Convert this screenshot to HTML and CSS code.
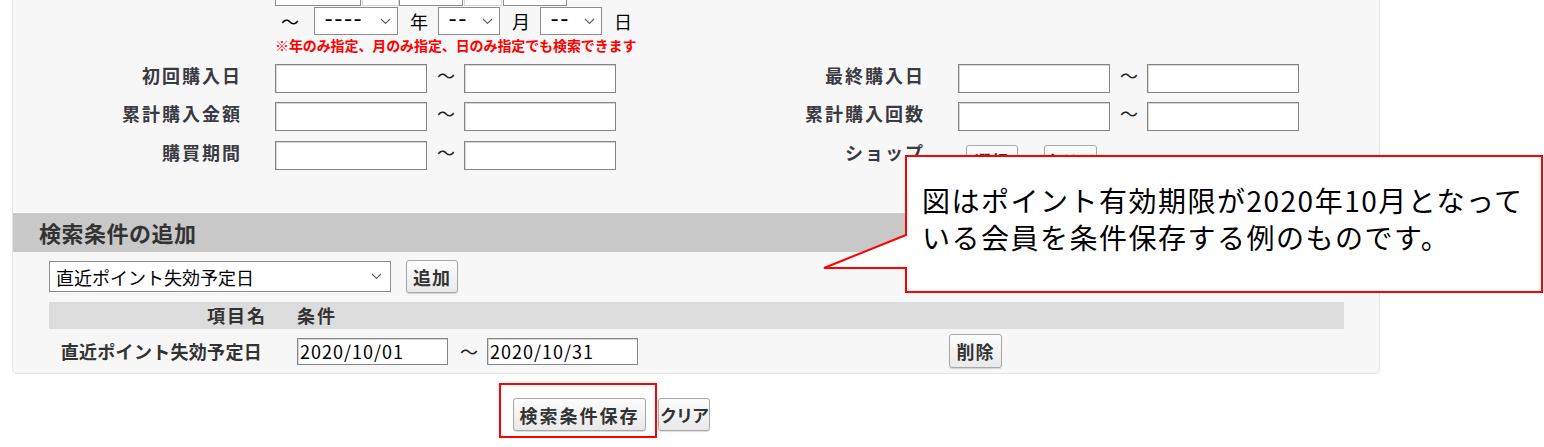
FILE: index.html
```html
<!DOCTYPE html>
<html lang="ja">
<head>
    <meta charset="UTF-8">
    <title>検索条件の追加</title>
    <link rel="stylesheet" href="styles.css">
</head>
<body>
    <div class="panel">
        <div class="stub">
            <span class="box w86"></span>
            <span class="box light w37"></span>
            <span class="box w64"></span>
            <span class="box light w38"></span>
            <span class="box w64 gap1"></span>
        </div>

        <div class="date-row">
            <span class="wave">～</span>
            <div class="sel sel-year">
                <span class="dash">----</span>
                <svg width="11" height="7" viewBox="0 0 11 7"><path d="M1 1l4.5 4.5L10 1" fill="none" stroke="#666" stroke-width="1.2"/></svg>
            </div>
            <span class="unit">年</span>
            <div class="sel sel-md">
                <span class="dash">--</span>
                <svg width="11" height="7" viewBox="0 0 11 7"><path d="M1 1l4.5 4.5L10 1" fill="none" stroke="#666" stroke-width="1.2"/></svg>
            </div>
            <span class="unit">月</span>
            <div class="sel sel-md">
                <span class="dash">--</span>
                <svg width="11" height="7" viewBox="0 0 11 7"><path d="M1 1l4.5 4.5L10 1" fill="none" stroke="#666" stroke-width="1.2"/></svg>
            </div>
            <span class="unit">日</span>
        </div>

        <p class="note">※年のみ指定、月のみ指定、日のみ指定でも検索できます</p>

        <div class="rows">
            <div class="row">
                <div class="half">
                    <span class="label">初回購入日</span>
                    <input type="text" class="text"><span class="tilde">～</span><input type="text" class="text">
                </div>
                <div class="half right">
                    <span class="label">最終購入日</span>
                    <input type="text" class="text"><span class="tilde">～</span><input type="text" class="text">
                </div>
            </div>
            <div class="row">
                <div class="half">
                    <span class="label">累計購入金額</span>
                    <input type="text" class="text"><span class="tilde">～</span><input type="text" class="text">
                </div>
                <div class="half right">
                    <span class="label">累計購入回数</span>
                    <input type="text" class="text"><span class="tilde">～</span><input type="text" class="text">
                </div>
            </div>
            <div class="row">
                <div class="half">
                    <span class="label">購買期間</span>
                    <input type="text" class="text"><span class="tilde">～</span><input type="text" class="text">
                </div>
                <div class="half right">
                    <span class="label">ショップ</span>
                    <button type="button" class="btn shop">選択</button>
                    <button type="button" class="btn shop">クリア</button>
                </div>
            </div>
        </div>

        <h3 class="bar">検索条件の追加</h3>

        <div class="add">
            <div class="sel sel-item">
                <span>直近ポイント失効予定日</span>
                <svg width="11" height="7" viewBox="0 0 11 7"><path d="M1 1l4.5 4.5L10 1" fill="none" stroke="#666" stroke-width="1.2"/></svg>
            </div>
            <button type="button" class="btn btn-add">追加</button>
        </div>

        <div class="cond">
            <div class="cond-head">
                <span class="c1">項目名</span>
                <span class="c2">条件</span>
            </div>
            <div class="cond-row">
                <span class="c1">直近ポイント失効予定日</span>
                <input type="text" class="date" value="2020/10/01"><span class="tilde">～</span><input type="text" class="date" value="2020/10/31">
                <button type="button" class="btn btn-del">削除</button>
            </div>
        </div>
    </div>

    <div class="actions">
        <span class="mark"><button type="button" class="btn btn-save">検索条件保存</button></span>
        <button type="button" class="btn btn-clear">クリア</button>
    </div>

    <div class="callout">
        <svg width="721" height="139" viewBox="0 0 721 139">
            <path d="M83 1H719V137H83V113L1 113L83 80Z" fill="#fff" stroke="#f00" stroke-width="2"/>
        </svg>
        <p>図はポイント有効期限が2020年10月となって<br>いる会員を条件保存する例のものです。</p>
    </div>
</body>
</html>
```

FILE: styles.css
```css
*{
    margin: 0;
    padding: 0;
    box-sizing: border-box;
}

body{
    font-family: "Noto Sans CJK JP", "Noto Sans", sans-serif;
    color: #333;
    background: #fff;
}

.panel{
    margin-left: 12px;
    width: 1368px;
    background: #f7f7f7;
    border: 1px solid #e4e4e4;
    border-top: 0;
    border-radius: 0 0 5px 5px;
    padding-bottom: 5px;
}

/* rows cut off at the top */
.stub{
    display: flex;
    height: 6px;
    padding-left: 262px;
}

.stub .box{
    height: 6px;
    background: #fff;
    border: 1px solid #8c8c8c;
    border-top: 0;
}

.stub .light{
    border-color: #d4d4d4;
    margin-left: 1px;
}

.stub .gap1{
    margin-left: 1px;
}

.w86{ width: 86px; }
.w37{ width: 37px; }
.w38{ width: 38px; }
.w64{ width: 64px; }

.date-row{
    display: flex;
    align-items: center;
    height: 28px;
    margin-top: 1px;
    padding-left: 268px;
    color: #000;
    font-size: 18px;
}

.date-row .wave{
    margin-right: 15px;
}

.date-row .unit{
    margin: 0 10px 0 12px;
}

.sel{
    display: flex;
    align-items: center;
    justify-content: space-between;
    height: 28px;
    background: #fff;
    border: 1px solid #8c8c8c;
    padding: 0 6px 0 7px;
    color: #000;
}

.sel svg{
    flex: none;
}

.sel-year{ width: 84px; }
.sel-md{ width: 62px; }

.dash{
    font-family: "Liberation Mono", monospace;
    font-size: 22px;
    line-height: 26px;
    letter-spacing: -3.5px;
}

.note{
    margin-top: 2px;
    padding-left: 262px;
    color: #f00;
    font-size: 14px;
    line-height: 16px;
    font-weight: bold;
    letter-spacing: -0.1px;
}

.rows{
    margin-top: 11px;
}

.row{
    display: flex;
    height: 29px;
}

.row + .row{
    margin-top: 9px;
}

.row:nth-child(3){
    margin-top: 10px;
}

.half{
    display: flex;
    align-items: flex-start;
}

.label{
    width: 229px;
    margin-right: 33px;
    text-align: right;
    font-size: 18px;
    line-height: 22px;
    font-weight: bold;
    letter-spacing: 2px;
    color: #3a3a42;
}

.half.right .label{
    width: 309px;
}

.text, .date{
    width: 152px;
    height: 29px;
    background: #fff;
    border: 1px solid #858585;
    box-shadow: inset 1px 1px 0 #d6d6d6;
    outline: none;
}

.tilde{
    margin: 0 9px 0 10px;
    font-size: 18px;
    line-height: 22px;
    color: #222;
}

.btn{
    font-family: "Noto Sans CJK JP", sans-serif;
    font-size: 18px;
    font-weight: bold;
    letter-spacing: 1px;
    color: #333;
    background: linear-gradient(#fcfcfc, #e9e9e9);
    border: 1px solid #a8a8a8;
    border-radius: 3px;
    box-shadow: 0 1px 1px rgba(0,0,0,0.15);
    height: 33px;
    padding: 0;
    white-space: nowrap;
}

.btn.shop{
    width: 52px;
    height: 30px;
    margin-top: 4px;
    margin-left: 8px;
    font-size: 16px;
}

.btn.shop + .btn.shop{
    margin-left: 26px;
    width: 53px;
}

.bar{
    margin-top: 43px;
    height: 39px;
    line-height: 39px;
    background: #c8c8c8;
    box-shadow: 0 -1px 0 #fff;
    padding-left: 26px;
    font-size: 22px;
    font-weight: bold;
    letter-spacing: 0.5px;
    color: #333;
}

.add{
    display: flex;
    align-items: center;
    padding: 8px 0 0 36px;
}

.sel-item{
    width: 342px;
    height: 31px;
    font-size: 18px;
    padding: 0 8px 0 6px;
}

.btn-add{
    width: 52px;
    margin-left: 15px;
}

.cond{
    margin: 9px 0 0 36px;
    width: 1295px;
}

.cond-head{
    display: flex;
    height: 27px;
    line-height: 27px;
    background: #dcdcdc;
    font-size: 18px;
    font-weight: bold;
    letter-spacing: 2px;
    color: #333;
}

.cond-head .c1{
    width: 248px;
    padding-right: 30px;
    text-align: right;
}

.cond-row{
    display: flex;
    align-items: center;
    padding-top: 5px;
}

.cond-row .c1{
    width: 248px;
    padding-right: 35px;
    text-align: right;
    font-size: 18px;
    font-weight: bold;
    letter-spacing: 0.3px;
    color: #333;
}

.date{
    width: 151px;
    height: 27px;
    padding-left: 2px;
    font-family: "Noto Sans CJK JP", sans-serif;
    font-size: 18px;
    letter-spacing: 1px;
    color: #000;
}

.cond-row .tilde{
    margin: 0 9px 0 12px;
}

.btn-del{
    width: 53px;
    height: 34px;
    margin-left: 311px;
}

.actions{
    display: flex;
    align-items: flex-start;
    margin: 9px 0 0 499px;
}

.mark{
    display: block;
    border: 2px solid #f00;
    padding: 13px 9px 5px 12px;
}

.btn-save{
    display: block;
    width: 133px;
    letter-spacing: 2px;
}

.btn-clear{
    width: 52px;
    margin: 15px 0 0 1px;
    font-size: 17px;
    letter-spacing: -1px;
}

.callout{
    position: absolute;
    left: 823px;
    top: 155px;
    width: 721px;
    height: 139px;
}

.callout svg{
    display: block;
}

.callout p{
    position: absolute;
    left: 99px;
    top: 27px;
    font-size: 28px;
    line-height: 37px;
    letter-spacing: 1.5px;
    color: #000;
    white-space: nowrap;
}
```
